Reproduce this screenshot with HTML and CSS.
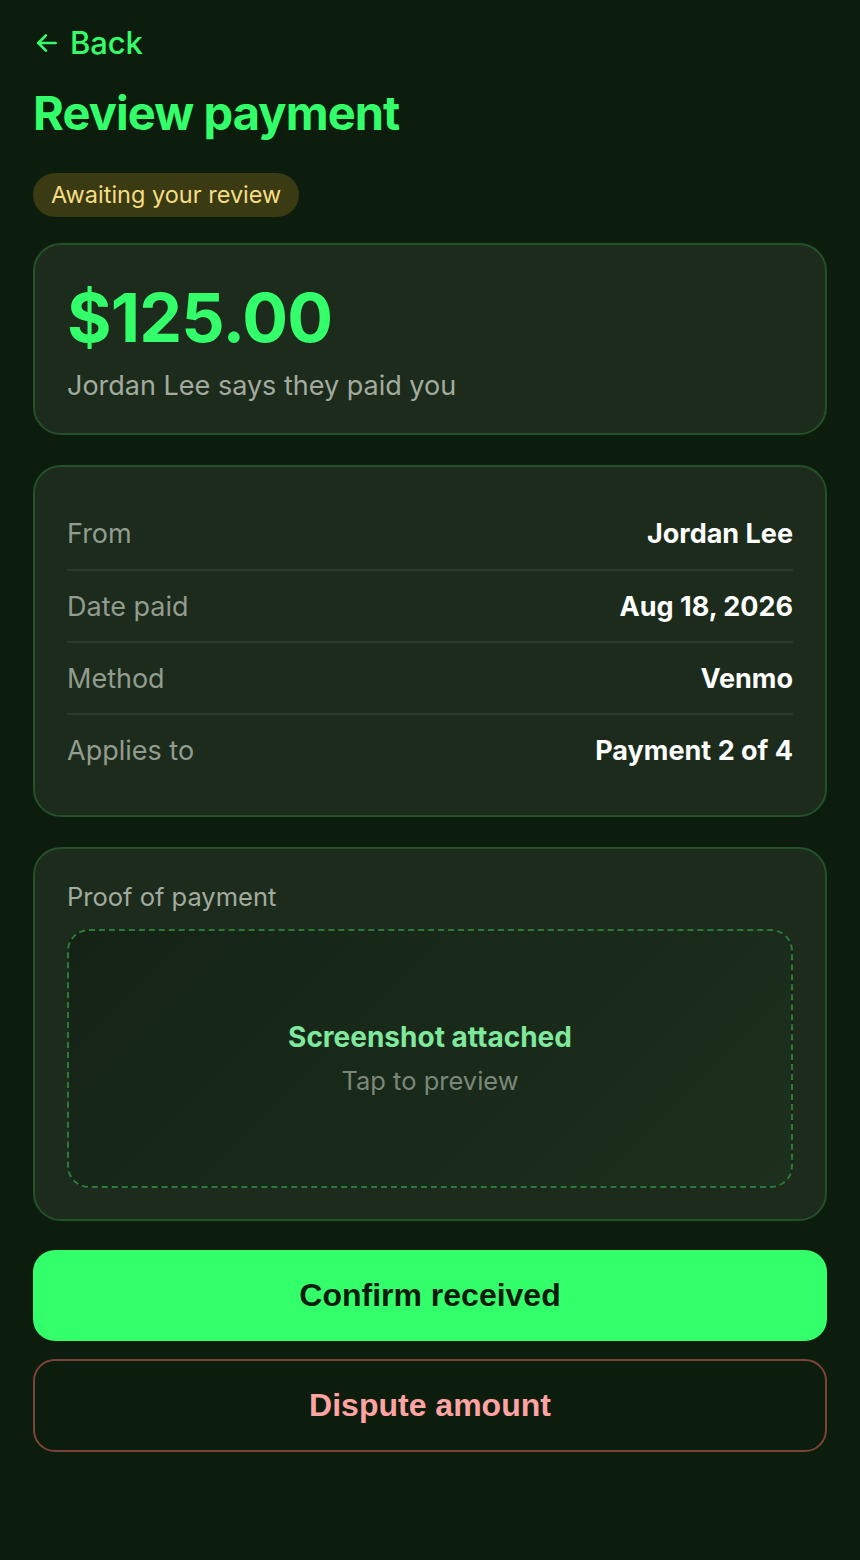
FILE: index.html
```html
<!DOCTYPE html>
<html lang="en">
<head>
<meta charset="utf-8">
<title>Review payment</title>
<link rel="stylesheet" href="styles.css">
</head>
<body>
<main class="page">
  <a class="back" href="#">
    <svg class="back-icon" viewBox="0 0 24 24" width="26" height="26" fill="none" stroke="currentColor" stroke-width="2.4" stroke-linecap="round" stroke-linejoin="round"><path d="M20 12H4"/><path d="M11 5l-7 7 7 7"/></svg>
    <span>Back</span>
  </a>
  <h1 class="title">Review payment</h1>
  <div class="badge-row"><span class="badge">Awaiting your review</span></div>

  <section class="card amount-card">
    <div class="amount">$125.00</div>
    <div class="amount-sub">Jordan Lee says they paid you</div>
  </section>

  <section class="card details">
    <div class="row"><span class="label">From</span><span class="value">Jordan Lee</span></div>
    <div class="row"><span class="label">Date paid</span><span class="value">Aug 18, 2026</span></div>
    <div class="row"><span class="label">Method</span><span class="value">Venmo</span></div>
    <div class="row"><span class="label">Applies to</span><span class="value">Payment 2 of 4</span></div>
  </section>

  <section class="card proof">
    <div class="proof-label">Proof of payment</div>
    <div class="proof-box">
      <div class="proof-title">Screenshot attached</div>
      <div class="proof-hint">Tap to preview</div>
    </div>
  </section>

  <button class="btn btn-primary" type="button">Confirm received</button>
  <button class="btn btn-secondary" type="button">Dispute amount</button>
</main>
</body>
</html>
```
FILE: styles.css
```css
* { box-sizing: border-box; }
html, body { margin: 0; padding: 0; }
body {
  background: #0c1d0e;
  font-family: Inter, "Noto Sans", "Liberation Sans", sans-serif;
  color: #ffffff;
  min-height: 1560px;
}
.page {
  display: flex;
  flex-direction: column;
  padding: 25px 33px 40px;
}
.back {
  display: flex;
  align-items: center;
  gap: 10px;
  color: #33ff6a;
  text-decoration: none;
  font-size: 31px;
  font-weight: 500;
  line-height: 36px;
  height: 36px;
  letter-spacing: -0.1px;
}
.back-icon { margin-left: 1px; }
.title {
  margin: 23px 0 0;
  font-size: 47px;
  line-height: 58px;
  font-weight: 700;
  letter-spacing: -0.9px;
  color: #33ff6a;
}
.badge-row { display: flex; margin-top: 31px; }
.badge {
  display: inline-block;
  background: #3a3a13;
  color: #f6dd86;
  font-size: 23.5px;
  line-height: 28px;
  padding: 8px 18px;
  border-radius: 22px;
}
.card {
  background: #1c2b1c;
  border: 2px solid #24502a;
  border-radius: 28px;
}
.amount-card {
  margin-top: 26px;
  padding: 33px 32px 30px;
}
.amount {
  font-size: 68px;
  line-height: 79px;
  font-weight: 700;
  color: #33ff6a;
  letter-spacing: -0.8px;
}
.amount-sub {
  margin-top: 12px;
  font-size: 27px;
  line-height: 34px;
  color: #a3ab9f;
}
.details {
  margin-top: 30px;
  padding: 31px 32px 30px;
  display: flex;
  flex-direction: column;
}
.row {
  display: flex;
  justify-content: space-between;
  align-items: center;
  height: 72px;
  border-top: 2px solid #2b3b2b;
  font-size: 27px;
}
.row:first-child { border-top: none; height: 71px; }
.label { color: #929c8f; }
.value { color: #ffffff; font-weight: 700; }
.proof {
  margin-top: 30px;
  padding: 31px 32px 31px;
}
.proof-label {
  font-size: 25.5px;
  line-height: 34px;
  color: #a3ab9f;
}
.proof-box {
  margin-top: 15px;
  height: 259px;
  border: 2px dashed #2b7a3a;
  border-radius: 22px;
  background: linear-gradient(135deg, #142316 0%, #1d2f1d 100%);
  display: flex;
  flex-direction: column;
  align-items: center;
  justify-content: center;
  gap: 11px;
}
.proof-title {
  font-size: 28px;
  line-height: 34px;
  font-weight: 700;
  color: #7fe89c;
}
.proof-hint {
  font-size: 25.5px;
  line-height: 32px;
  color: #7b8779;
}
.btn {
  font-family: "Liberation Sans", Arial, sans-serif;
  font-weight: 700;
  font-size: 32px;
  border-radius: 22px;
  width: 100%;
  cursor: pointer;
}
.btn-primary {
  margin-top: 29px;
  height: 91px;
  background: #33ff6a;
  color: #0d1a0e;
  border: none;
}
.btn-secondary {
  margin-top: 18px;
  height: 93px;
  background: transparent;
  color: #ffa3a3;
  border: 2px solid #7c4338;
}
```
